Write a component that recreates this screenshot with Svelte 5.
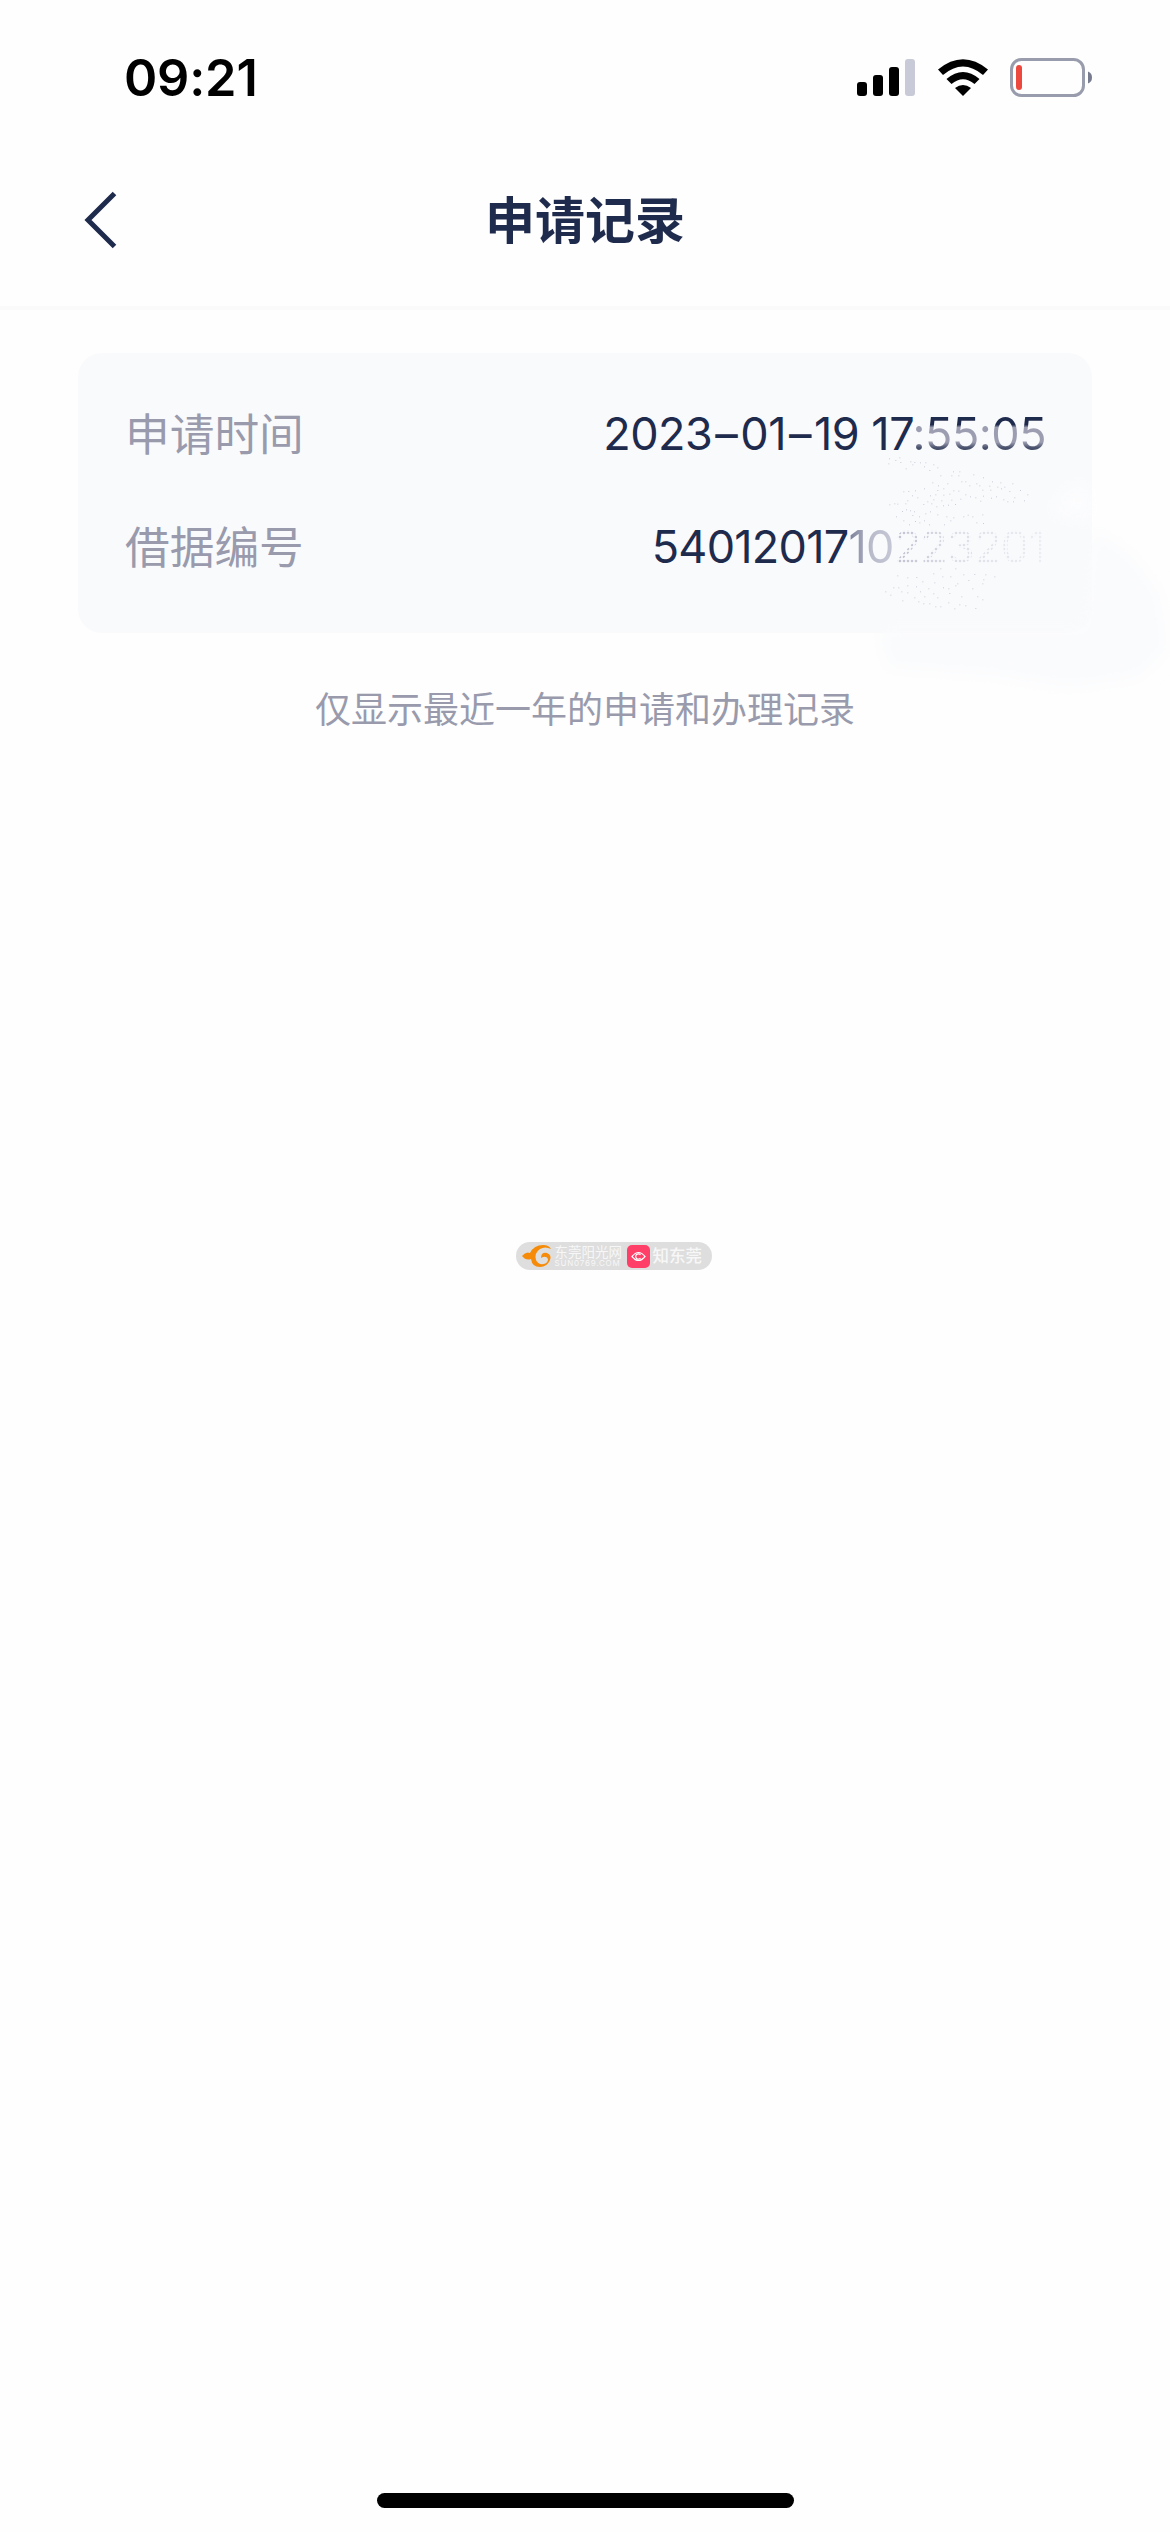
<script>
	const note = '仅显示最近一年的申请和办理记录'

	//loose specks around the smudged number
	const specks = [
		[205,370],[207,355],[226,360],[238,352],[241,366],[257,385],[271,364],[283,366],[277,373],[300,367],[316,367],[312,379],[340,373],[352,382],[328,390],[361,406],[394,406],[399,394],[418,394],[415,406],[460,403],[489,412],[337,427],[382,430],[424,424],[436,424],[312,445],[285,451],[265,453],[250,454],[354,436],[352,450],[370,445],[400,451],[415,452],[448,436],[469,430],[478,436],[516,424],[541,427],[577,430],[508,437],[532,440],[553,440],[543,445],[568,453],[600,450],[622,463],[612,481],[583,472],[579,484],[562,484],[550,478],[528,469],[513,473],[489,467],[511,449],[487,449],[481,482],[466,472],[450,469],[436,463],[421,476],[388,461],[370,464],[346,463],[330,466],[276,466],[292,472],[340,478],[364,481],[394,479],[208,493],[223,490],[232,491],[256,490],[262,481],[310,492],[322,484],[334,490],[349,499],[369,496],[384,494],[405,492],[228,529],[246,513],[258,508],[270,511],[282,514],[277,525],[297,529],[316,520],[330,514],[352,523],[379,529],[400,532],[430,529],[443,524],[457,529],[487,523],[250,541],[267,553],[285,543],[298,547],[312,541],[327,553],[372,553],[391,541],[469,547],[489,549],[232,706],[262,712],[289,711],[307,724],[340,700],[361,685],[391,709],[406,685],[430,703],[463,702],[496,703],[523,709],[490,718],[487,730],[445,720],[412,730],[367,709],[343,727],[325,745],[369,742],[385,745],[406,736],[457,745],[472,769],[487,778],[466,804],[436,796],[418,793],[403,805],[385,787],[361,799],[346,799],[328,790],[310,790],[295,784],[283,772],[247,781],[262,757],[244,754],[235,742],[220,742],[211,764],[196,754],[262,736],[288,739],[300,754],[313,769],[340,760],[352,772],[388,759],[424,769]
	]
</script>

<main>
	<div class="status">
		<span class="time">09:21</span>
		<div class="indicators">
			<svg width="58" height="38" viewBox="0 0 58 38">
				<rect x="0" y="23" width="10" height="14" rx="3" />
				<rect x="16" y="16" width="10" height="21" rx="3" />
				<rect x="32" y="8" width="10" height="29" rx="3" />
				<rect x="48" y="0" width="10" height="37" rx="3" fill="#c9cad7" />
			</svg>
			<svg class="wifi" width="52" height="38" viewBox="0 0 52 38">
				<path d="M1 10.500Q26 -10 51 10.500L46 16Q26 -1 6 16Z" />
				<path d="M9.500 20Q26 6 42.500 20L37.500 25Q26 15.500 14.500 25Z" />
				<path d="M18 29Q26 23 34 29L26 37Z" />
			</svg>
			<svg width="83" height="40" viewBox="0 0 83 40">
				<rect x="1.500" y="1.500" width="72" height="36" rx="10" fill="none" stroke="#999cad" stroke-width="3" />
				<rect x="6" y="7" width="6" height="25" rx="3" fill="#ec483d" />
				<path d="M78 13.500Q82 15 82 19.500Q82 24 78 25.500Z" fill="#777b90" />
			</svg>
		</div>
	</div>

	<header>
		<svg class="back" width="34" height="58" viewBox="0 0 34 58">
			<path d="M30.500 2.500L4 29L30.500 55.500" fill="none" stroke="#1f2b4d" stroke-width="5" />
		</svg>
		<h1>申请记录</h1>
	</header>

	<section class="card">
		<svg class="smudge" width="400" height="290" viewBox="0 0 400 290">
			<defs>
				<filter id="soft" x="-20%" y="-20%" width="140%" height="140%">
					<feGaussianBlur stdDeviation="8" />
				</filter>
			</defs>
			<path d="M10 165L20 205L120 212L200 224L270 215L300 185L292 130L262 90L225 66L215 165Z" fill="#fafbfd" filter="url(#soft)" />
			<path d="M205 20L224 26L224 60L180 50Z" fill="#fff" opacity=".5" filter="url(#soft)" />
		</svg>
		<div class="row">
			<span class="label">申请时间</span>
			<span class="value">2023<i>–</i>01<i>–</i>19 17<span class="worn">:55:05</span></span>
		</div>
		<div class="row">
			<span class="label">借据编号</span>
			<span class="value number">54012017<span class="faded">10</span><span class="dotted">223201</span></span>
		</div>
		<svg class="specks" width="160" height="170" viewBox="180 330 480 510">
			{#each specks as [x, y]}
				<rect {x} {y} width="3" height="3" fill="#cbccda" />
			{/each}
		</svg>
	</section>

	<p class="note">{note}</p>

	<div class="mark">
		<svg width="31" height="24" viewBox="0 0 31 24">
			<path d="M1 12Q5 7 9 9Q13 1 22 1Q28 1 30 5Q24 2 19 5Q13 9 15 16Q17 21 23 20Q27 19 27 15Q25 11 20 14Q20 8 26 9Q31 11 29 16Q26 23 19 23Q11 23 10 15Q5 17 1 12Z" fill="#f58b08" />
		</svg>
		<div class="site">
			<b>东莞阳光网</b>
			<small>SUN0769.COM</small>
		</div>
		<svg class="eye" width="23" height="23" viewBox="0 0 23 23">
			<rect width="23" height="23" rx="5" fill="#ff3f67" />
			<path d="M5 11.500Q11.500 3.500 18 11.500Q11.500 19.500 5 11.500Z" fill="none" stroke="#fff" stroke-width="1.200" />
			<path d="M13.500 9.800A2.700 2.700 0 1 0 13.500 13.200" fill="none" stroke="#fff" stroke-width="1.200" />
		</svg>
		<b class="know">知东莞</b>
	</div>

	<div class="home"></div>
</main>

<style>
	:global(body){
		margin:0;
		background:#fefefe;
	}
	main{
		display:flex;
		flex-direction:column;
		align-items:center;
		box-sizing:border-box;
		width:1170px;
		height:2532px;
		padding-bottom:24px;
		overflow:hidden;
		background:#fefefe;
		font-family:Inter, "Noto Sans CJK SC", sans-serif;
		color:#1f2b4d;
	}
	svg{
		display:block;
		flex:none;
	}
	.status{
		display:flex;
		justify-content:space-between;
		align-items:center;
		box-sizing:border-box;
		width:100%;
		height:156px;
		padding:0 77px 0 124px;
	}
	.time{
		padding-bottom:1px;
		font-size:50.500px;
		font-weight:600;
		letter-spacing:-.2px;
		color:#000;
	}
	.indicators{
		display:flex;
		align-items:center;
	}
	.wifi{
		margin:0 21px 0 22px;
	}
	header{
		display:grid;
		grid-template-columns:1fr auto 1fr;
		align-items:center;
		box-sizing:border-box;
		width:100%;
		height:154px;
		padding:0 84px 22px;
		border-bottom:4px solid #fafafb;
	}
	h1{
		margin:0;
		padding-top:2px;
		font-size:50px;
		line-height:70px;
		font-weight:600;
	}
	.card{
		position:relative;
		display:flex;
		flex-direction:column;
		box-sizing:border-box;
		width:1014px;
		height:280px;
		margin-top:43px;
		padding:24px 46px 0 47px;
		border-radius:24px;
		background:#f9fafc;
	}
	.row{
		position:relative;
		display:flex;
		justify-content:space-between;
		align-items:center;
		height:113px;
	}
	.label{
		padding-bottom:4px;
		font-size:44.700px;
		color:#999bad;
	}
	.value{
		font-size:45px;
		font-weight:400;
		letter-spacing:-.5px;
		white-space:nowrap;
	}
	.value i{
		margin:0 3px;
		font-style:normal;
	}
	.number{
		letter-spacing:-.75px;
	}
	.worn{
		color:transparent;
		background:linear-gradient(#1f2b4d 34%, #9c9db0 39%, #9c9db0 66%, #47506b 76%);
		background-clip:text;
	}
	.faded{
		color:transparent;
		background:linear-gradient(90deg, #777c94 0, #b9bbcb 50%, #c7c8d6);
		background-clip:text;
	}
	.dotted{
		color:#bfc1d0;
		mask-image:radial-gradient(circle, #000 30%, transparent 60%), linear-gradient(90deg, #000, rgba(0,0,0,.5) 40%, rgba(0,0,0,.2));
		mask-size:4px 4px, 100% 100%;
		mask-composite:intersect;
	}
	.smudge{
		position:absolute;
		left:790px;
		top:110px;
	}
	.specks{
		position:absolute;
		left:802px;
		top:97px;
	}
	.note{
		margin:50px 0 0;
		font-size:36px;
		line-height:54px;
		color:#999bad;
	}
	.mark{
		display:flex;
		align-items:center;
		box-sizing:border-box;
		width:196px;
		height:28px;
		margin:505px 0 0 57px;
		padding-left:5px;
		border-radius:14px;
		background:#dedede;
		color:#f7f7f7;
	}
	.site{
		display:flex;
		flex-direction:column;
		width:68px;
		margin-left:3px;
	}
	.site b{
		font-size:13.500px;
		line-height:14px;
		font-weight:400;
		white-space:nowrap;
	}
	.site small{
		font-size:8px;
		line-height:8px;
		letter-spacing:.8px;
	}
	.eye{
		margin:0 3px 0 4px;
	}
	.know{
		font-size:16.500px;
		line-height:22px;
		font-weight:500;
		white-space:nowrap;
	}
	.home{
		width:417px;
		height:15px;
		margin-top:auto;
		border-radius:8px;
		background:#000;
	}
</style>
